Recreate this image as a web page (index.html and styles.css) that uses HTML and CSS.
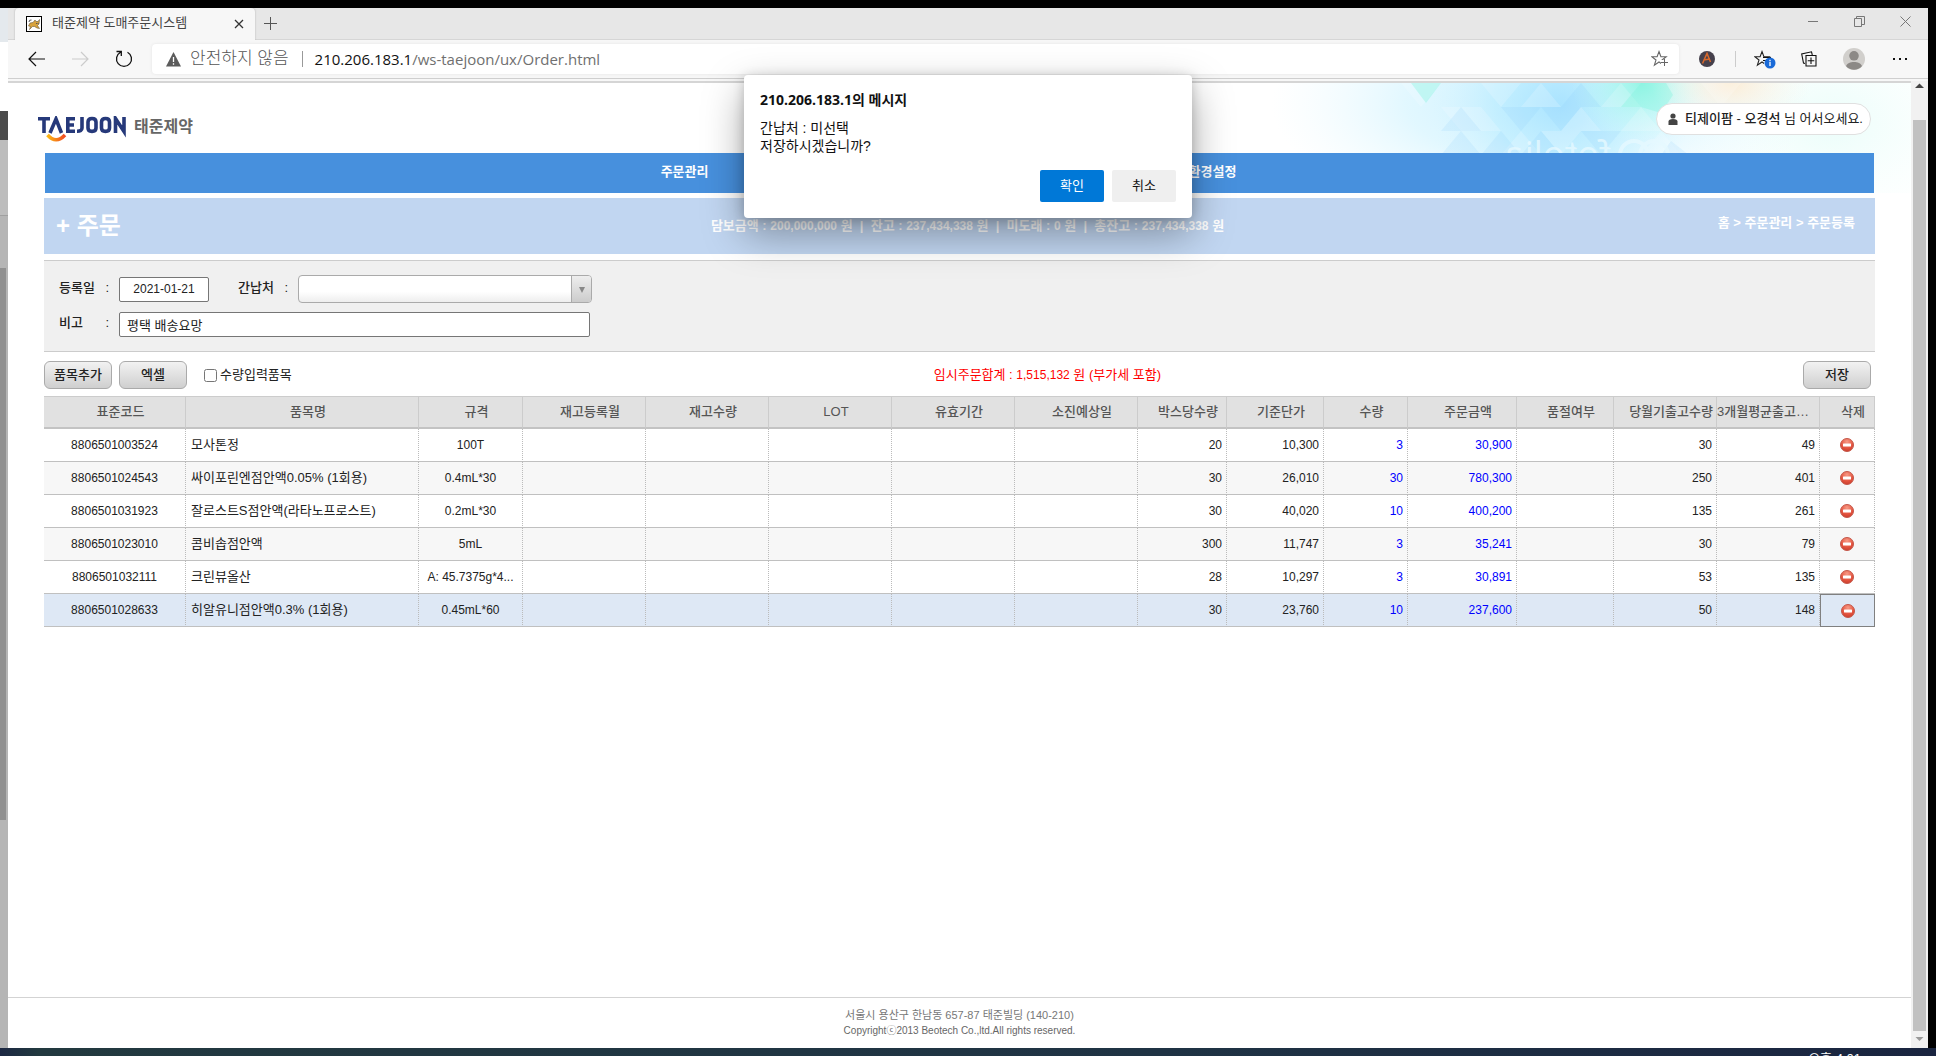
FILE: index.html
```html
<!DOCTYPE html>
<html lang="ko">
<head>
<meta charset="utf-8">
<title>태준제약 도매주문시스템</title>
<link rel="stylesheet" href="styles.css">
</head>
<body>
<svg class="sprite" aria-hidden="true">
  <defs>
    <radialGradient id="red" cx="50%" cy="25%" r="80%"><stop offset="0" stop-color="#f79a86"/><stop offset="0.6" stop-color="#e4543f"/><stop offset="1" stop-color="#c63a2b"/></radialGradient>
    <linearGradient id="smile-fill"><stop offset="0" stop-color="#fdb913"/><stop offset="1" stop-color="#ee4a23"/></linearGradient>
    <symbol id="minus" viewBox="0 0 14 14"><circle cx="7" cy="7" r="6.500" fill="url(#red)" stroke="#c4584a"/><rect x="3" y="5.500" width="8" height="3" rx="0.500" fill="#fff"/></symbol>
    <symbol id="star" viewBox="0 0 20 20"><path d="M8 2.500 9.900 7.700H15.200L11 11 12.600 16.200 8 13 3.400 16.200 5 11 .8 7.700H6.100Z" fill="none" stroke="currentColor" stroke-width="1.100"/></symbol>
  </defs>
</svg>

<div class="desktop">
  <div class="behind" aria-hidden="true">
    <div class="behind-tab"></div>
    <div class="behind-bar"></div>
    <div class="behind-dark"></div>
    <div class="behind-panel"></div>
    <div class="behind-step"></div>
    <div class="behind-thumb"></div>
    <div class="behind-track"></div>
  </div>

  <div class="browser">
    <div class="tabs">
      <div class="tab">
        <svg class="favicon" viewBox="0 0 16 16"><rect x="0.500" y="0.500" width="15" height="15" fill="#fff" stroke="#000"/><path d="M2.500 10 4 7 7 6.500 9 4 10 5.500 12 5.500 13.500 3.500 13 8 11.500 9.500 13.500 12.500 11 12 8.500 10.500 6.500 10.500 3.500 13.500 4.500 10.500Z" fill="#d8a23c" stroke="#6b5a3c" stroke-width="0.600"/><path d="M3 6Q3 3.500 5.500 4M10.500 7V8M12 7V8" fill="none" stroke="#555"/></svg>
        <span class="tab-title">태준제약 도매주문시스템</span>
        <button class="bare tab-close" aria-label="탭 닫기"><svg width="10" height="10" viewBox="0 0 10 10"><path d="M1 1 9 9M9 1 1 9" stroke="#333" stroke-width="1.300"/></svg></button>
      </div>
      <button class="bare new-tab" aria-label="새 탭"><svg width="13" height="13" viewBox="0 0 13 13"><path d="M6.500 0V13M0 6.500H13" stroke="#555"/></svg></button>
      <div class="window-buttons">
        <button class="bare" aria-label="최소화"><svg width="10" height="11" viewBox="0 0 10 11"><path d="M0 5.500H10" stroke="#777"/></svg></button>
        <button class="bare" aria-label="이전 크기로"><svg width="11" height="11" viewBox="0 0 11 11"><path d="M.5 2.500H7.500V10.500H.5ZM2.500 2.500V.5H10.500V8.500H7.500" fill="none" stroke="#777"/></svg></button>
        <button class="bare" aria-label="닫기"><svg width="11" height="11" viewBox="0 0 11 11"><path d="M.5.5 10.500 10.500M10.500.5.5 10.500" stroke="#777"/></svg></button>
      </div>
    </div>

    <div class="toolbar">
      <button class="bare nav-button" aria-label="뒤로"><svg width="17" height="16" viewBox="0 0 17 16"><path d="M8 1 1 8 8 15M1 8H17" fill="none" stroke="#111" stroke-width="1.200"/></svg></button>
      <button class="bare nav-button" aria-label="앞으로"><svg width="17" height="16" viewBox="0 0 17 16"><path d="M9 1 16 8 9 15M16 8H0" fill="none" stroke="#ccc" stroke-width="1.200"/></svg></button>
      <button class="bare nav-button" aria-label="새로 고침"><svg width="18" height="18" viewBox="0 0 18 18"><path d="M5.500 2.300A7.500 7.500 0 1 0 12.500 2.300M1.500 1.500H6.300V6" fill="none" stroke="#111" stroke-width="1.300"/></svg></button>
      <div class="address">
        <svg width="15" height="15" viewBox="0 0 15 15"><path d="M7.500 0 15 14.500H0Z" fill="#5c5c5c"/><path d="M7.500 5V10M7.500 11.300V12.800" stroke="#fff" stroke-width="1.300"/></svg>
        <span class="unsafe">안전하지 않음</span>
        <span class="address-line"></span>
        <span class="url"><b>210.206.183.1</b>/ws-taejoon/ux/Order.html</span>
        <button class="bare favorite" aria-label="즐겨찾기에 추가"><svg width="20" height="20"><use href="#star" width="20" height="20"/><rect x="10" y="11" width="7" height="7" fill="#fff"/><path d="M13.500 10V17M10 13.500H17" stroke="#666"/></svg></button>
      </div>
      <button class="bare extension" aria-label="확장"><svg width="18" height="18" viewBox="0 0 18 18"><circle cx="9" cy="9" r="8" fill="#45404c"/><path d="M4.500 13.500 9 3.500 12.500 12M5.500 10 12 9" fill="none" stroke="#d9682b" stroke-width="1.500"/></svg></button>
      <span class="toolbar-line"></span>
      <button class="bare tool" aria-label="즐겨찾기"><svg width="22" height="20" viewBox="0 0 22 20"><use href="#star" width="20" height="20"/><rect x="10" y="9" width="6" height="8" fill="#f7f7f7"/><path d="M9 8.500H17M9 11.500H12" stroke="#111"/><circle cx="16" cy="14" r="5.500" fill="#1a6ad8"/><path d="M16 10.800V12.200M16 13V17" stroke="#fff" stroke-width="1.300"/></svg></button>
      <button class="bare tool" aria-label="컬렉션"><svg width="16" height="16" viewBox="0 0 16 16"><path d="M5 4.500H15V15H5ZM10 6.500V13M6.700 9.800H13.300M4 12.500 2.500 12 .7 3 10.500 .8 11.300 4" fill="none" stroke="#111" stroke-width="1.100"/></svg></button>
      <button class="bare profile" aria-label="프로필"><svg width="24" height="24" viewBox="0 0 24 24"><circle cx="12" cy="12" r="11" fill="#d1cfcc"/><circle cx="12" cy="8.800" r="4.800" fill="#8c8986"/><path d="M4 19C6 13.500 18 13.500 20 19 16 24 8 24 4 19Z" fill="#8c8986"/></svg></button>
      <button class="bare profile" aria-label="설정 및 기타"><svg width="14" height="4" viewBox="0 0 14 4"><path d="M0 1H2V3H0ZM6 1H8V3H6ZM12 1H14V3H12Z" fill="#111"/></svg></button>
    </div>

    <div class="viewport">
      <div class="page">
        <header class="site-header">
          <svg class="banner" viewBox="0 0 640 110" preserveAspectRatio="xMaxYMin slice" aria-hidden="true">
            <defs>
              <radialGradient id="cyan"><stop offset="0" stop-color="#9fe0ff" stop-opacity="0.900"/><stop offset="0.500" stop-color="#b4ecff" stop-opacity="0.600"/><stop offset="1" stop-color="#d8f6ff" stop-opacity="0"/></radialGradient>
              <radialGradient id="mint"><stop offset="0" stop-color="#8ff5e2" stop-opacity="0.900"/><stop offset="1" stop-color="#c8fff5" stop-opacity="0"/></radialGradient>
              <radialGradient id="peach"><stop offset="0" stop-color="#fdebd2" stop-opacity="0.900"/><stop offset="1" stop-color="#fff6ea" stop-opacity="0"/></radialGradient>
            </defs>
            <ellipse cx="270" cy="20" rx="270" ry="120" fill="url(#cyan)" opacity="0.650"/>
            <ellipse cx="290" cy="20" rx="130" ry="130" fill="url(#cyan)" opacity="0.800"/>
            <ellipse cx="370" cy="0" rx="70" ry="60" fill="url(#mint)"/>
            <ellipse cx="560" cy="40" rx="150" ry="110" fill="url(#mint)" opacity="0.200"/>
            <ellipse cx="460" cy="0" rx="80" ry="50" fill="url(#peach)"/>
            <g fill="#fff" opacity="0.180">
              <path d="M130 0 150 24 170 0ZM170 24 190 48 210 24ZM210 0 230 24 250 0ZM190 48 210 24 230 48ZM250 24 270 0 290 24ZM230 72 250 48 270 72ZM290 48 310 24 330 48ZM270 48 290 72 310 48ZM330 24 350 0 370 24ZM350 48 370 24 390 48ZM370 72 390 48 410 72ZM390 24 410 48 430 24ZM430 0 450 24 470 0Z"/>
            </g>
            <g fill="#7fc4fb" opacity="0.140">
              <path d="M170 48 190 24 210 48ZM230 24 250 48 270 24ZM270 24 290 48 310 24ZM290 24 310 0 330 24ZM210 72 230 48 250 72ZM310 48 330 72 350 48ZM170 72 190 48 210 72ZM390 72 400 58 418 72ZM250 72 270 48 290 72Z"/>
            </g>
            <path d="M350 24 370 0H395L402 12 390 30 370 24ZM140 0H170L155 20Z" fill="#7df3dc" opacity="0.350"/>
            <g class="watermark"><text x="-340" y="84">fotolia</text><circle cx="363" cy="72" r="14"/><circle cx="383" cy="72" r="14"/></g>
          </svg>
          <a class="logo" href="#" aria-label="TAEJOON 태준제약">
            <svg width="90" height="27" viewBox="0 0 90 27"><g fill="none" stroke="#26397a" stroke-width="3.600"><path d="M0 2.800H12M6 2.800V17M12 17 18 3 23.500 17M37 2.800H29.800V15.200H37M29.800 9H36M44 1V12Q44 15.300 39 15.200M50 6Q50 2.500 54 2.500T58 6V12Q58 15.400 54 15.400T50 12ZM63.500 6Q63.500 2.500 67.500 2.500T71.500 6V12Q71.500 15.400 67.500 15.400T63.500 12ZM77.500 17V2.500L86 15.500V1"/></g><path d="M9.500 19Q18 28.500 27 19" fill="none" stroke="url(#smile-fill)" stroke-width="3.500"/></svg>
            <span>태준제약</span>
          </a>
          <div class="user"><svg width="10" height="12" viewBox="0 0 10 12"><circle cx="5" cy="3" r="2.600" fill="#444"/><path d="M.5 12V8.500Q.5 6 5 6T9.500 8.500V12Z" fill="#444"/></svg><span><b>티제이팜 - 오경석</b> 님 어서오세요.</span></div>
        </header>

        <nav class="menu"><a href="#">주문관리</a><a href="#">환경설정</a></nav>

        <div class="title-bar">
          <h1>+ 주문</h1>
          <p class="balance">담보금액 : <span>200,000,000</span> 원 &nbsp;|&nbsp; 잔고 : <span>237,434,338</span> 원 &nbsp;|&nbsp; 미도래 : <span>0</span> 원 &nbsp;|&nbsp; 총잔고 : <span>237,434,338</span> 원</p>
          <p class="crumbs">홈 &gt; 주문관리 &gt; 주문등록</p>
        </div>

        <form class="order-form">
          <div class="field-row">
            <label for="date"><span>등록일</span><span>:</span></label>
            <input id="date" class="date" type="text" value="2021-01-21">
            <label for="vendor" class="vendor-label"><span>간납처</span><span>:</span></label>
            <span class="vendor"><select id="vendor"><option></option></select></span>
          </div>
          <div class="field-row">
            <label for="note"><span>비고</span><span>:</span></label>
            <input id="note" class="note" type="text" value="평택 배송요망">
          </div>
        </form>

        <div class="actions">
          <button class="btn">품목추가</button>
          <button class="btn">엑셀</button>
          <label class="only"><input type="checkbox">수량입력품목</label>
          <p class="sum">임시주문합계 : <span>1,515,132</span> 원 (부가세 포함)</p>
          <button class="btn save">저장</button>
        </div>

        <table class="grid">
          <colgroup>
            <col class="w-code"><col class="w-name"><col class="w-spec"><col class="w-wide"><col class="w-wide"><col class="w-wide"><col class="w-wide"><col class="w-wide"><col class="w-box"><col class="w-mid"><col class="w-qty"><col class="w-sum"><col class="w-mid"><col class="w-avg"><col class="w-avg"><col class="w-del">
          </colgroup>
          <thead><tr><th>표준코드</th><th>품목명</th><th>규격</th><th>재고등록월</th><th>재고수량</th><th>LOT</th><th>유효기간</th><th>소진예상일</th><th>박스당수량</th><th>기준단가</th><th>수량</th><th>주문금액</th><th>품절여부</th><th>당월기출고수량</th><th class="long">3개월평균출고수량</th><th>삭제</th></tr></thead>
          <tbody>
            <tr><td>8806501003524</td><td class="name">모사톤정</td><td>100T</td><td></td><td></td><td></td><td></td><td></td><td class="num">20</td><td class="num">10,300</td><td class="num blue">3</td><td class="num blue">30,900</td><td></td><td class="num">30</td><td class="num">49</td><td><button class="bare" aria-label="삭제"><svg width="14" height="14"><use href="#minus"/></svg></button></td></tr>
            <tr class="even"><td>8806501024543</td><td class="name">싸이포린엔점안액0.05% (1회용)</td><td>0.4mL*30</td><td></td><td></td><td></td><td></td><td></td><td class="num">30</td><td class="num">26,010</td><td class="num blue">30</td><td class="num blue">780,300</td><td></td><td class="num">250</td><td class="num">401</td><td><button class="bare" aria-label="삭제"><svg width="14" height="14"><use href="#minus"/></svg></button></td></tr>
            <tr><td>8806501031923</td><td class="name">잘로스트S점안액(라타노프로스트)</td><td>0.2mL*30</td><td></td><td></td><td></td><td></td><td></td><td class="num">30</td><td class="num">40,020</td><td class="num blue">10</td><td class="num blue">400,200</td><td></td><td class="num">135</td><td class="num">261</td><td><button class="bare" aria-label="삭제"><svg width="14" height="14"><use href="#minus"/></svg></button></td></tr>
            <tr class="even"><td>8806501023010</td><td class="name">콤비솝점안액</td><td>5mL</td><td></td><td></td><td></td><td></td><td></td><td class="num">300</td><td class="num">11,747</td><td class="num blue">3</td><td class="num blue">35,241</td><td></td><td class="num">30</td><td class="num">79</td><td><button class="bare" aria-label="삭제"><svg width="14" height="14"><use href="#minus"/></svg></button></td></tr>
            <tr><td>8806501032111</td><td class="name">크린뷰올산</td><td>A: 45.7375g*4...</td><td></td><td></td><td></td><td></td><td></td><td class="num">28</td><td class="num">10,297</td><td class="num blue">3</td><td class="num blue">30,891</td><td></td><td class="num">53</td><td class="num">135</td><td><button class="bare" aria-label="삭제"><svg width="14" height="14"><use href="#minus"/></svg></button></td></tr>
            <tr class="selected"><td>8806501028633</td><td class="name">히알유니점안액0.3% (1회용)</td><td>0.45mL*60</td><td></td><td></td><td></td><td></td><td></td><td class="num">30</td><td class="num">23,760</td><td class="num blue">10</td><td class="num blue">237,600</td><td></td><td class="num">50</td><td class="num">148</td><td class="focused"><button class="bare" aria-label="삭제"><svg width="14" height="14"><use href="#minus"/></svg></button></td></tr>
          </tbody>
        </table>

        <footer>
          <p>서울시 용산구 한남동 657-87 태준빌딩 (140-210)</p>
          <p class="copyright">Copyrightⓒ2013 Beotech Co.,ltd.All rights reserved.</p>
        </footer>
      </div>
      <div class="scrollbar" aria-hidden="true">
        <svg width="17" height="39" viewBox="0 0 17 39"><path d="M4 7 8.500 2.500 13 7Z" fill="#444"/></svg>
        <div class="thumb"></div>
        <svg width="17" height="17" viewBox="0 0 17 17"><path d="M4.500 6H12.500L8.500 10Z" fill="#999"/></svg>
      </div>
    </div>

    <div class="dialog" role="dialog" aria-labelledby="dialog-title">
      <h2 id="dialog-title">210.206.183.1의 메시지</h2>
      <p>간납처 : 미선택<br>저장하시겠습니까?</p>
      <div class="dialog-buttons"><button class="ok">확인</button><button>취소</button></div>
    </div>
  </div>
</div>
<div class="taskbar"><span class="clock">오후 4:01</span></div>
</body>
</html>
```
FILE: styles.css
```css
* { box-sizing: border-box; }

body {
  margin: 0;
  min-height: 100vh;
  display: flex;
  flex-direction: column;
  background: #000;
  color: #222;
  font: 13px/16px "Liberation Sans", "Noto Sans CJK KR", sans-serif;
}

h1, h2, p { margin: 0; }
a { color: inherit; text-decoration: none; }
button, input, select { font: inherit; color: inherit; }
svg { display: block; flex: none; }
.sprite { position: absolute; width: 0; height: 0; }

.bare {
  display: flex;
  align-items: center;
  justify-content: center;
  border: 0;
  padding: 0;
  background: none;
}

.desktop { flex: 1; display: flex; padding: 8px 8px 0 0; }

/* window edge that shows behind the browser */
.behind { width: 8px; display: flex; flex-direction: column; background: #b5b5b5; }
.behind-tab { height: 34px; background: #e4e9ed; }
.behind-bar { height: 69px; background: #fff; }
.behind-dark { height: 29px; background: #4b4b4b; }
.behind-panel { height: 76px; background: #bdbdbd; border-bottom: 1px solid #a0a0a0; }
.behind-step { height: 52px; }
.behind-thumb { flex: 552; width: 6px; background: #909090; }
.behind-track { flex: 228; }

.browser { flex: 1; min-width: 0; display: flex; flex-direction: column; position: relative; background: #f7f7f7; }

.tabs { display: flex; height: 32px; background: #e7e7e7; border-bottom: 1px solid #d6d6d6; padding-left: 7px; }
.tab { width: 240px; height: 32px; display: flex; align-items: center; padding: 0 11px; background: #f7f7f7; border-radius: 4px 4px 0 0; box-shadow: 0 0 2px #aaa; clip-path: inset(0 -2px 0 -2px); color: #444; }
.favicon { width: 16px; height: 16px; margin-right: 10px; }
.tab-title { flex: 1; padding-bottom: 2px; }
.tab-close { width: 10px; }
.new-tab { width: 30px; }
.window-buttons { margin-left: auto; display: flex; padding-bottom: 4px; }
.window-buttons .bare { width: 46px; }

.toolbar { height: 39px; display: flex; align-items: center; padding: 0 5px 0 6px; border-bottom: 1px solid #cfcfcf; }
.nav-button { width: 44px; }
.address { flex: 1; height: 30px; display: flex; align-items: center; margin: 0 8px 0 6px; padding: 0 8px 0 14px; background: #fff; border-radius: 4px; box-shadow: 0 0 3px #e2e2e2; }
.unsafe { margin-left: 9px; font-size: 17px; font-weight: 300; color: #555; line-height: 20px; }
.address-line { width: 1px; height: 16px; margin: 0 12px 0 13px; background: #999; }
.url { flex: 1; font: 15px/20px "Open Sans", sans-serif; color: #707070; }
.url b { font-weight: 400; color: #111; }
.favorite { color: #666; }
.extension { width: 40px; }
.toolbar-line { width: 1px; height: 16px; margin: 0 7px 0 8px; background: #ccc; }
.tool { width: 44px; }
.profile { width: 46px; }

.viewport { flex: 1; display: flex; margin-top: 2px; }
.page { flex: 1; min-width: 0; display: flex; flex-direction: column; background: #fff; border-top: 2px solid #d5d5d5; }

.scrollbar { width: 17px; display: flex; flex-direction: column; background: #f1f1f1; }
.thumb { flex: 1; width: 13px; margin-left: 2px; background: #c1c1c1; }

.site-header { position: relative; display: flex; justify-content: space-between; height: 70px; padding: 20px 40px 0 30px; }
.banner { position: absolute; top: 0; right: 0; width: 640px; height: 110px; }
.watermark { opacity: 0.8; }
.watermark text { font: 36px "Open Sans", sans-serif; fill: #e6f9ff; transform: scaleX(-1); }
.watermark circle { fill: none; stroke: #e6f9ff; stroke-width: 4px; }
.logo { display: flex; align-items: center; gap: 6px; height: 47px; font-size: 16px; font-weight: 700; color: #666; }
.logo svg { margin-top: 6px; }
.user { position: relative; display: flex; align-items: center; gap: 7px; height: 32px; padding: 0 7px 0 11px; background: #fff; border: 1px solid #e0e0e0; border-radius: 16px; }
.user b { font-weight: 500; }

.menu { position: relative; display: flex; justify-content: center; gap: 480px; height: 40px; margin: 0 37px; padding: 0 22px 2px 0; align-items: center; background: #4790dd; color: #fff; font-weight: 700; }

.title-bar { display: grid; grid-template-columns: 1fr auto 1fr; align-items: center; height: 56px; margin: 5px 36px 0; padding: 0 20px 0 12px; background: #c1d6f1; color: #fff; font-weight: 700; }
.title-bar h1 { font-size: 24px; line-height: 32px; font-weight: 700; }
.balance { white-space: nowrap; padding-left: 24px; }
.balance span, .sum span { font-size: 12px; }
.crumbs { text-align: right; padding-bottom: 6px; }

.order-form { display: flex; flex-direction: column; gap: 9px; height: 92px; margin: 6px 36px 0; padding: 14px 15px; background: #f0f0f0; border: solid #ccc; border-width: 1px 0; }
.field-row { display: flex; align-items: center; height: 28px; }
.field-row label { width: 60px; display: flex; justify-content: space-between; padding: 0 10px 3px 0; font-weight: 500; }
.field-row .vendor-label { margin-left: 29px; }
.field-row input { height: 25px; background: #fff; border: 1px solid #767676; border-radius: 2px; }
.field-row .date { width: 90px; text-align: center; font-size: 12px; }
.note { width: 471px; padding: 0 7px; }
.vendor { position: relative; }
.vendor select { width: 294px; height: 28px; display: block; appearance: none; border: 1px solid #aaa; border-radius: 4px; background: linear-gradient(#fff 60%, #eee); }
.vendor::before { content: ""; position: absolute; right: 1px; top: 1px; width: 19px; height: 26px; border-left: 1px solid #aaa; border-radius: 0 3px 3px 0; background: linear-gradient(#eee, #ccc); pointer-events: none; }
.vendor::after { content: ""; position: absolute; right: 7px; top: 12px; border: solid transparent; border-width: 6px 3px 0; border-top-color: #888; pointer-events: none; }

.actions { position: relative; display: flex; align-items: center; gap: 7px; height: 44px; margin: 0 40px 0 36px; padding-top: 2px; }
.btn { width: 68px; height: 28px; padding: 0; border: 1px solid #aaa; border-radius: 6px; background: linear-gradient(#f2f2f2, #cfcfcf); color: #222; font-weight: 500; }
.only { display: flex; align-items: center; gap: 3px; margin-left: 10px; }
.only input { width: 13px; height: 13px; margin: 0; }
.sum { flex: 1; text-align: center; color: #f00; }

.grid { width: calc(100% - 72px); margin: 0 36px; table-layout: fixed; border-collapse: separate; border-spacing: 0; font-size: 12px; }
.w-code { width: 142px; }
.w-name { width: 233px; }
.w-spec { width: 104px; }
.w-wide { width: 123px; }
.w-box { width: 89px; }
.w-mid { width: 97px; }
.w-qty { width: 84px; }
.w-sum { width: 109px; }
.w-avg { width: 103px; }
.w-del { width: 55px; }
.grid th { height: 33px; padding: 0 0 0 12px; background: #e1e1e1; border: solid #ccc; border-width: 1px 1px 2px 0; border-bottom-color: #c3c3c3; color: #555; font-size: 13px; font-weight: 500; white-space: nowrap; overflow: hidden; text-overflow: ellipsis; }
.grid .long { padding: 0 6px 0 0; }
.grid td { height: 33px; padding: 0 4px; text-align: center; border: 0 solid #c0c0c0; border-bottom-width: 1px; border-right: 1px dotted #bbb; white-space: nowrap; overflow: hidden; }
.grid .even td { background: #f7f7f7; }
.grid .selected td { background: #dee8f5; }
.grid .name { text-align: left; font-size: 13px; padding-left: 5px; }
.grid .num { text-align: right; }
.grid .blue { color: #00f; }
.grid td .bare { margin: 0 auto; }
.grid .focused { border: 1px solid #808080; }

footer { margin-top: auto; height: 51px; padding-top: 9px; border-top: 1px solid #d3d3d3; text-align: center; color: #777; font-size: 11px; }
.copyright { font-size: 10px; color: #666; }

.dialog { position: absolute; top: 67px; left: 736px; width: 448px; padding: 16px; background: #fff; border-radius: 4px; box-shadow: 0 16px 40px rgba(0, 0, 0, 0.35), 0 2px 12px rgba(0, 0, 0, 0.2); color: #111; }
.dialog h2 { font: 700 14px/18px "Open Sans", "Noto Sans CJK KR", sans-serif; }
.dialog p { margin-top: 10px; font-size: 14px; line-height: 18px; }
.dialog-buttons { display: flex; justify-content: flex-end; gap: 8px; margin-top: 15px; }
.dialog button { width: 64px; height: 32px; border: 0; border-radius: 2px; background: #efefef; }
.dialog .ok { background: #0078d7; color: #fff; }

.taskbar { height: 8px; overflow: hidden; display: flex; justify-content: flex-end; padding: 3px 75px 0 0; background: linear-gradient(90deg, #1c2843, #22393f 2%, #1f3344 60%, #1a2540); color: #fff; }
```
